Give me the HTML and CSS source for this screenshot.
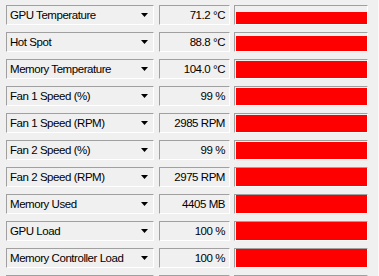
FILE: index.html
```html
<!DOCTYPE html>
<html>
<head>
<meta charset="utf-8">
<link rel="stylesheet" href="styles.css">
</head>
<body>
<div class="panel">
  <div class="rows">
    <div class="row">
      <div class="sel"><span>GPU Temperature</span><svg class="arrow" width="7" height="4" viewBox="0 0 7 4"><polygon points="0,0 7,0 3.5,4" fill="#000"/></svg></div>
      <div class="val">71.2 °C</div>
      <div class="graph"><div class="fill" style="height:12px"></div></div>
    </div>
    <div class="row">
      <div class="sel"><span>Hot Spot</span><svg class="arrow" width="7" height="4" viewBox="0 0 7 4"><polygon points="0,0 7,0 3.5,4" fill="#000"/></svg></div>
      <div class="val">88.8 °C</div>
      <div class="graph"><div class="fill" style="height:15px"></div></div>
    </div>
    <div class="row">
      <div class="sel"><span>Memory Temperature</span><svg class="arrow" width="7" height="4" viewBox="0 0 7 4"><polygon points="0,0 7,0 3.5,4" fill="#000"/></svg></div>
      <div class="val">104.0 °C</div>
      <div class="graph"><div class="fill" style="height:17px"></div></div>
    </div>
    <div class="row">
      <div class="sel"><span>Fan 1 Speed (%)</span><svg class="arrow" width="7" height="4" viewBox="0 0 7 4"><polygon points="0,0 7,0 3.5,4" fill="#000"/></svg></div>
      <div class="val">99 %</div>
      <div class="graph"><div class="fill" style="height:17px"></div></div>
    </div>
    <div class="row">
      <div class="sel"><span>Fan 1 Speed (RPM)</span><svg class="arrow" width="7" height="4" viewBox="0 0 7 4"><polygon points="0,0 7,0 3.5,4" fill="#000"/></svg></div>
      <div class="val">2985 RPM</div>
      <div class="graph"><div class="fill" style="height:17px"></div></div>
    </div>
    <div class="row">
      <div class="sel"><span>Fan 2 Speed (%)</span><svg class="arrow" width="7" height="4" viewBox="0 0 7 4"><polygon points="0,0 7,0 3.5,4" fill="#000"/></svg></div>
      <div class="val">99 %</div>
      <div class="graph"><div class="fill" style="height:17px"></div></div>
    </div>
    <div class="row">
      <div class="sel"><span>Fan 2 Speed (RPM)</span><svg class="arrow" width="7" height="4" viewBox="0 0 7 4"><polygon points="0,0 7,0 3.5,4" fill="#000"/></svg></div>
      <div class="val">2975 RPM</div>
      <div class="graph"><div class="fill" style="height:18px"></div></div>
    </div>
    <div class="row">
      <div class="sel"><span>Memory Used</span><svg class="arrow" width="7" height="4" viewBox="0 0 7 4"><polygon points="0,0 7,0 3.5,4" fill="#000"/></svg></div>
      <div class="val">4405 MB</div>
      <div class="graph"><div class="fill" style="height:18px"></div></div>
    </div>
    <div class="row">
      <div class="sel"><span>GPU Load</span><svg class="arrow" width="7" height="4" viewBox="0 0 7 4"><polygon points="0,0 7,0 3.5,4" fill="#000"/></svg></div>
      <div class="val">100 %</div>
      <div class="graph"><div class="fill" style="height:18px"></div></div>
    </div>
    <div class="row">
      <div class="sel"><span>Memory Controller Load</span><svg class="arrow" width="7" height="4" viewBox="0 0 7 4"><polygon points="0,0 7,0 3.5,4" fill="#000"/></svg></div>
      <div class="val">100 %</div>
      <div class="graph"><div class="fill" style="height:18px"></div></div>
    </div>
    <div class="row">
      <div class="sel"></div>
      <div class="val"></div>
      <div class="graph"></div>
    </div>
  </div>
  <div class="edge"></div>
</div>
</body>
</html>
```
FILE: styles.css
```css
html, body {
  margin: 0;
  padding: 0;
  background: #f0f0f0;
  overflow: hidden;
}
body {
  width: 379px;
  height: 276px;
  font-family: "Liberation Sans", Arial, sans-serif;
  font-size: 11.5px;
  letter-spacing: -0.45px;
  color: #000;
}
.panel {
  display: flex;
  height: 276px;
  overflow: hidden;
}
.rows {
  padding: 5px 0 0 6px;
  display: flex;
  flex-direction: column;
  gap: 7px;
  width: 367px;
}
.row {
  display: flex;
  height: 20px;
  flex: none;
}
.sel, .val, .graph {
  box-sizing: border-box;
  height: 20px;
  border-top: 1px solid #a0a0a0;
  border-left: 1px solid #a0a0a0;
  border-right: 1px solid #fff;
  border-bottom: 1px solid #fff;
  background: #f0f0f0;
}
.sel {
  width: 148px;
  display: flex;
  align-items: center;
  justify-content: space-between;
  padding: 0 5px 0 3px;
}
.sel span {
  white-space: nowrap;
  line-height: 18px;
}
.arrow {
  display: block;
  flex: none;
}
.val {
  width: 71px;
  margin-left: 5px;
  text-align: right;
  padding-right: 4px;
  line-height: 18px;
  white-space: nowrap;
}
.graph {
  width: 134px;
  margin-left: 4px;
  display: flex;
  align-items: flex-end;
  padding-left: 1px;
}
.fill {
  flex: 1;
  background: #ff0000;
}
.edge {
  margin-left: 6px;
  width: 1px;
  background: #fafafa;
  height: 276px;
}
```
